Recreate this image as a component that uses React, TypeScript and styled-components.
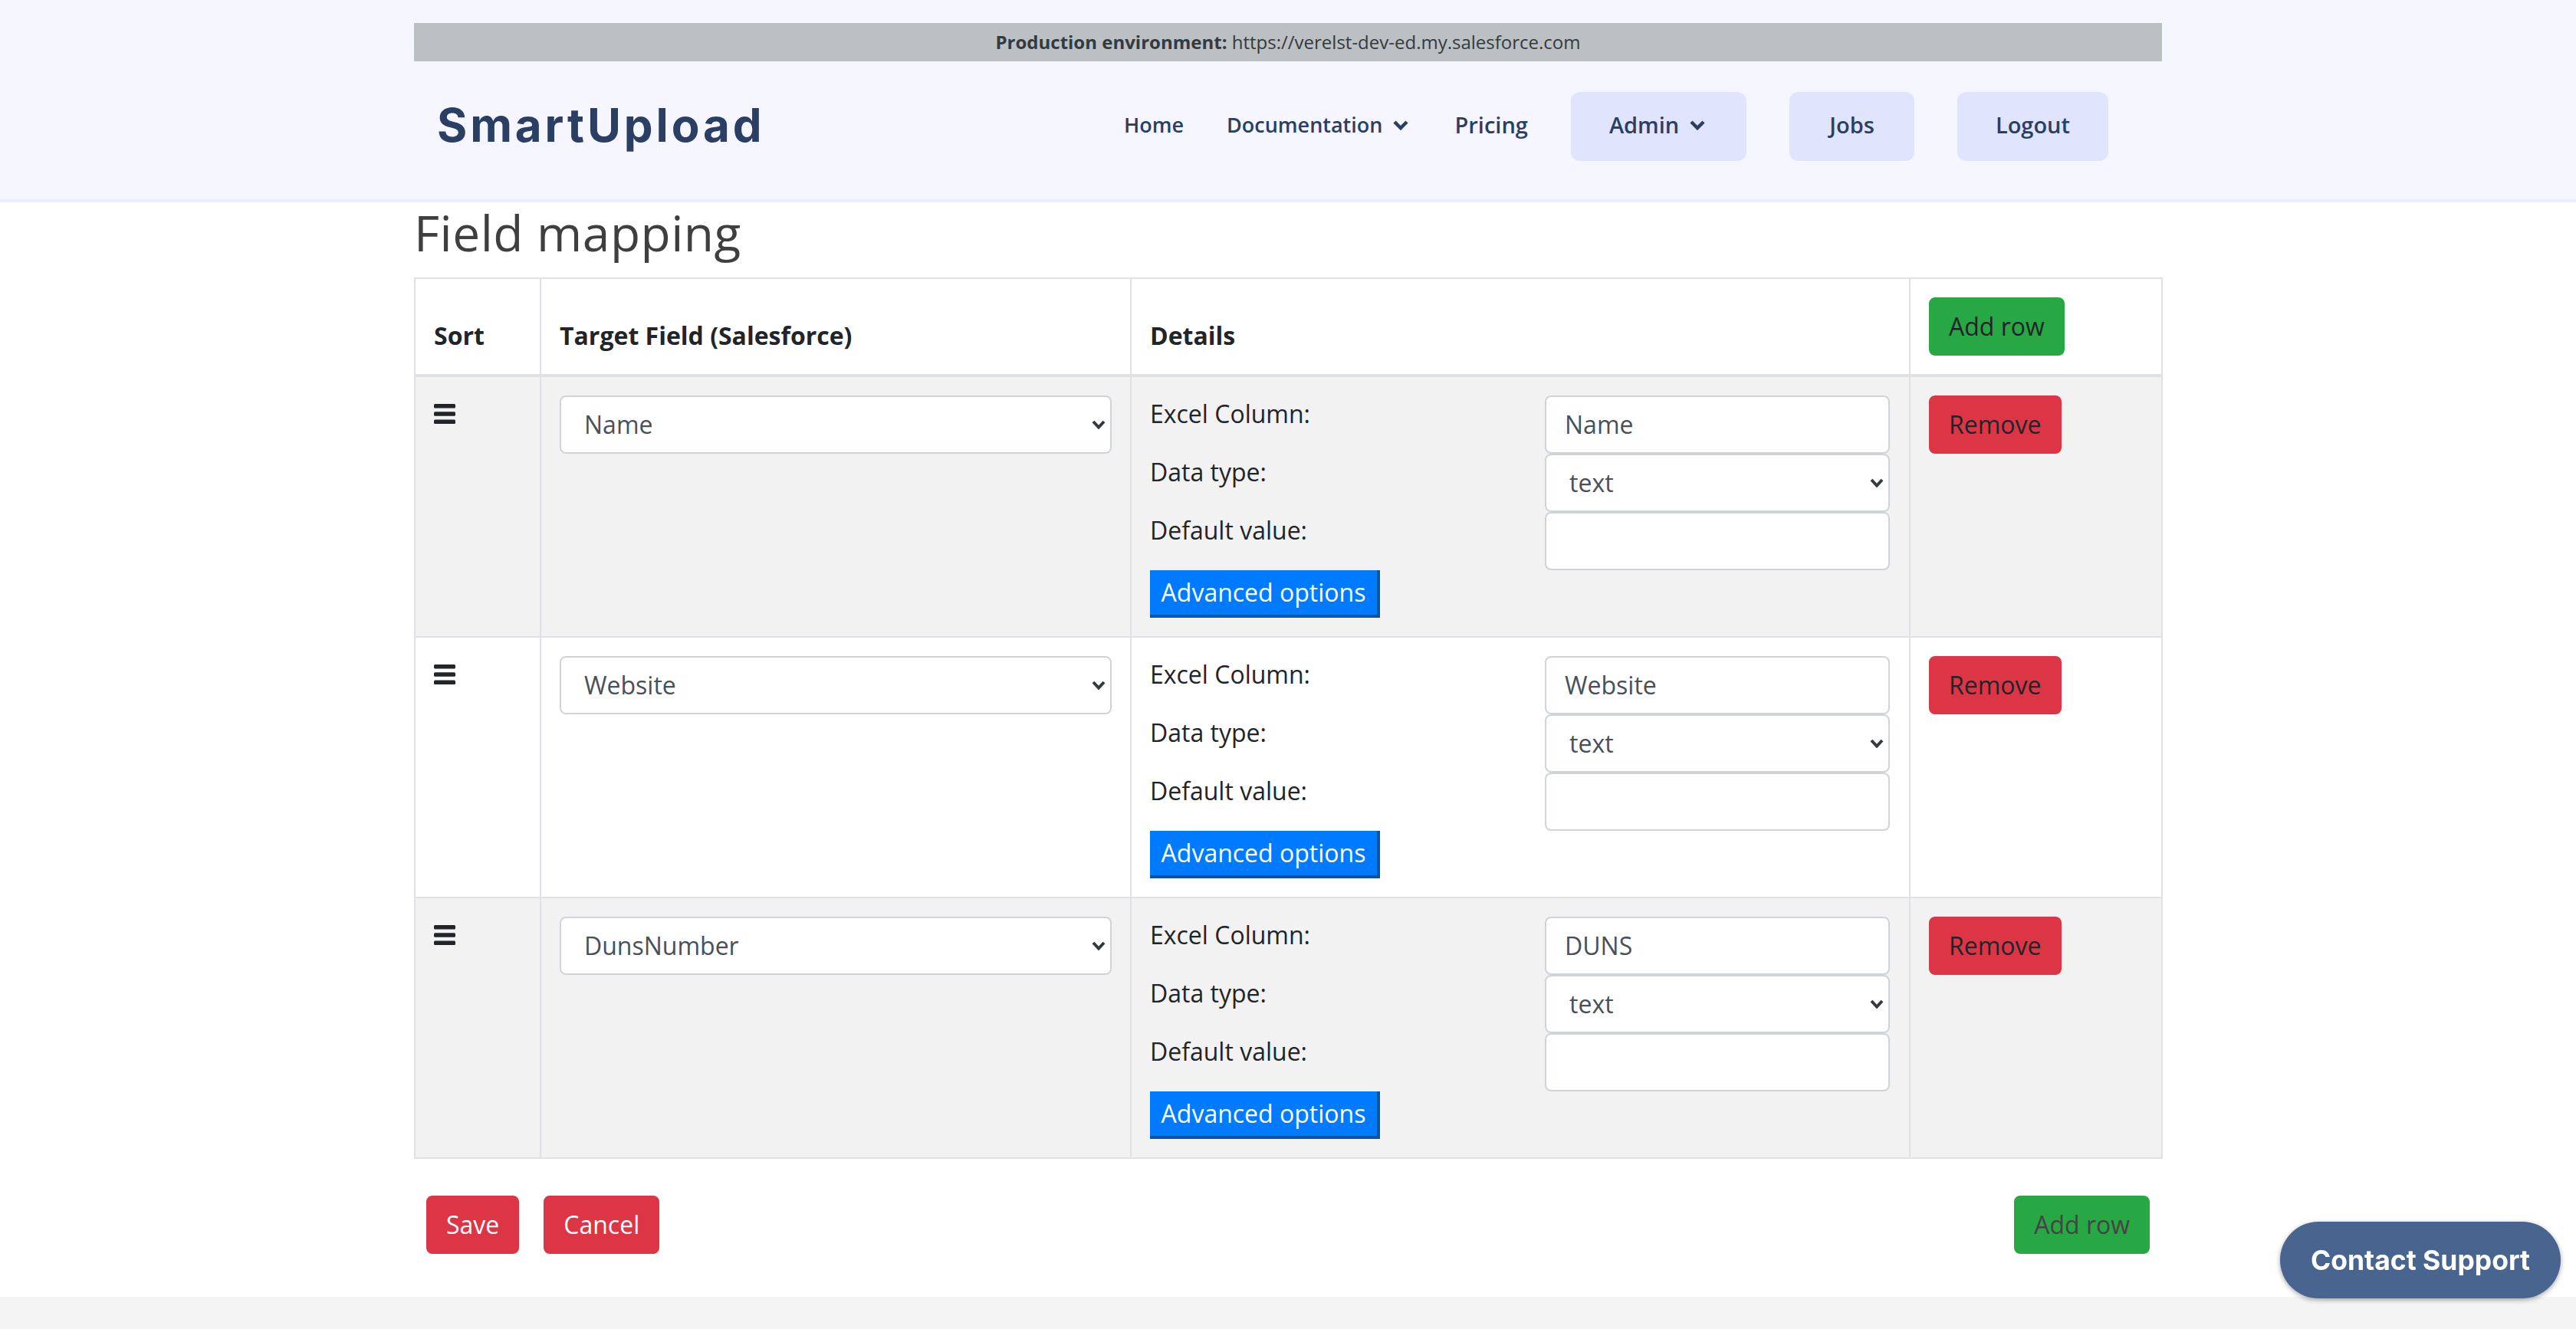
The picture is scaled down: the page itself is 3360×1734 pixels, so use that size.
import React from "react";
import styled, { createGlobalStyle } from "styled-components";

const GlobalStyle = createGlobalStyle`
  * {
    box-sizing: border-box;
  }
  body {
    margin: 0;
    background: #ffffff;
    color: #212529;
    font-family: "Open Sans", "Liberation Sans", sans-serif;
    font-size: 32px;
    line-height: 48px;
  }
`;

const Page = styled.div`
  display: flex;
  flex-direction: column;
  min-height: 100vh;
`;

const Header = styled.header`
  height: 264px;
  padding-top: 30px;
  background: #f5f6ff;
  border-bottom: 4px solid #ebedff;
`;

const Container = styled.div`
  width: 2280px;
  margin: 0 auto;
`;

const EnvBar = styled.div`
  height: 50px;
  background: #bbc0c3;
  color: #343a40;
  font-size: 24px;
  line-height: 50px;
  text-align: center;
  b {
    font-weight: 700;
  }
`;

const NavRow = styled.nav`
  display: flex;
  align-items: center;
  justify-content: space-between;
  height: 90px;
  margin-top: 40px;
  padding: 0 70px 0 30px;
`;

const Logo = styled.div`
  padding-bottom: 4px;
  color: #2a3f63;
  font-family: "Inter", "Open Sans", sans-serif;
  font-size: 60px;
  font-weight: 700;
  letter-spacing: 3.9px;
  line-height: 86px;
`;

const NavLinks = styled.div`
  display: flex;
  align-items: center;
  gap: 56px;
`;

const NavLink = styled.a<{ $size: number }>`
  display: flex;
  align-items: center;
  gap: 14px;
  height: 90px;
  padding-bottom: 4px;
  color: #2a3f63;
  font-size: ${(p) => p.$size}px;
  font-weight: 600;
`;

const NavPill = styled(NavLink)<{ $padX: number }>`
  padding: 0 ${(p) => p.$padX}px 4px;
  border-radius: 12px;
  background: #e0e4fd;
`;

const Chevron = styled.svg`
  display: block;
  width: 20px;
  height: 13px;
  margin-right: 4px;
  fill: none;
  stroke: #2a3f63;
  stroke-width: 4.5;
`;

const Main = styled.main`
  background: #ffffff;
  padding-bottom: 56px;
`;

const Title = styled.h1`
  margin: 2px 0 20px;
  color: #3f3f3f;
  font-size: 64px;
  font-weight: 400;
  letter-spacing: 0.5px;
  line-height: 76px;
`;

const Table = styled.table`
  width: 2279px;
  table-layout: fixed;
  border-collapse: collapse;
`;

const Th = styled.th`
  padding: 24px 24px 26px;
  border: 2px solid #dee2e6;
  border-bottom-width: 4px;
  font-weight: 700;
  text-align: left;
  vertical-align: bottom;
`;

const ActionTh = styled(Th)`
  padding-bottom: 24px;
`;

const Tr = styled.tr<{ $striped: boolean }>`
  background: ${(p) => (p.$striped ? "#f2f2f2" : "#ffffff")};
`;

const Td = styled.td`
  padding: 24px;
  border: 2px solid #dee2e6;
  vertical-align: top;
`;

const DragHandle = styled.svg`
  display: block;
  width: 28px;
  height: 26px;
  margin-top: 11px;
  fill: #212529;
`;

const DetailGrid = styled.div`
  display: grid;
  grid-template-columns: 515px 450px;
  grid-template-rows: repeat(3, 76px) 62px;
`;

const Label = styled.div`
  line-height: 48px;
`;

const TextInput = styled.input`
  display: block;
  width: 100%;
  height: 76px;
  padding: 11px 24px 13px;
  border: 2px solid #ced4da;
  border-radius: 8px;
  background: #ffffff;
  color: #495057;
  font-family: inherit;
  font-size: 32px;
`;

const Select = styled.select`
  display: block;
  width: 100%;
  height: 76px;
  padding: 11px 40px 13px 30px;
  border: 2px solid #ced4da;
  border-radius: 8px;
  appearance: none;
  background: #ffffff
    url("data:image/svg+xml,%3Csvg xmlns='http://www.w3.org/2000/svg' width='18' height='12'%3E%3Cpolyline points='2,2 9,9.5 16,2' fill='none' stroke='%23343a40' stroke-width='4'/%3E%3C/svg%3E")
    no-repeat right 6px center;
  color: #495057;
  font-family: inherit;
  font-size: 32px;
`;

const AdvancedButton = styled.button`
  justify-self: start;
  width: 300px;
  height: 62px;
  padding: 0;
  border: 0;
  border-right: 4px solid #0056a8;
  border-bottom: 4px solid #0056a8;
  background: #007bff;
  color: #ffffff;
  font-family: inherit;
  font-size: 32px;
  line-height: 58px;
`;

const Button = styled.button<{ $tone: "red" | "green"; $text: string }>`
  display: block;
  height: 76px;
  padding: 0 24px 2px;
  border: 2px solid ${(p) => (p.$tone === "red" ? "#dc3545" : "#28a745")};
  border-radius: 8px;
  background: ${(p) => (p.$tone === "red" ? "#dc3545" : "#28a745")};
  color: ${(p) => p.$text};
  font-family: inherit;
  font-size: 32px;
`;

const Actions = styled.div`
  display: flex;
  align-items: center;
  justify-content: space-between;
  margin-top: 48px;
  padding: 0 16px;
`;

const ActionGroup = styled.div`
  display: flex;
  gap: 32px;
`;

const Footer = styled.footer`
  flex: 1;
  background: #f4f4f4;
`;

const ContactButton = styled.button`
  position: fixed;
  right: 20px;
  bottom: 40px;
  width: 366px;
  height: 100px;
  border: 0;
  border-radius: 50px;
  background: #486590;
  box-shadow: 0 2px 6px rgba(0, 0, 0, 0.35);
  color: #ffffff;
  font-family: "Inter", "Liberation Sans", sans-serif;
  font-size: 35.5px;
  font-weight: 700;
`;

const rows = [
  { field: "Name", column: "Name" },
  { field: "Website", column: "Website" },
  { field: "DunsNumber", column: "DUNS" },
];

const DownIcon = () => (
  <Chevron viewBox="0 0 20 13">
    <polyline points="2,2 10,10 18,2" />
  </Chevron>
);

export default function App() {
  return (
    <Page>
      <GlobalStyle />
      <Header>
        <Container>
          <EnvBar>
            <b>Production environment:</b> https://verelst-dev-ed.my.salesforce.com
          </EnvBar>
          <NavRow>
            <Logo>SmartUpload</Logo>
            <NavLinks>
              <NavLink $size={27}>Home</NavLink>
              <NavLink $size={27}>
                Documentation
                <DownIcon />
              </NavLink>
              <NavLink $size={29}>Pricing</NavLink>
              <NavPill $size={29} $padX={50}>
                Admin
                <DownIcon />
              </NavPill>
              <NavPill $size={29} $padX={52}>Jobs</NavPill>
              <NavPill $size={29} $padX={50}>Logout</NavPill>
            </NavLinks>
          </NavRow>
        </Container>
      </Header>
      <Main>
        <Container>
          <Title>Field mapping</Title>
          <Table>
            <colgroup>
              <col width="164" />
              <col width="770" />
              <col width="1016" />
              <col width="329" />
            </colgroup>
            <thead>
              <tr>
                <Th>Sort</Th>
                <Th>Target Field (Salesforce)</Th>
                <Th>Details</Th>
                <ActionTh>
                  <Button $tone="green" $text="#212529">Add row</Button>
                </ActionTh>
              </tr>
            </thead>
            <tbody>
              {rows.map((row, i) => (
                <Tr key={row.field} $striped={i % 2 === 0}>
                  <Td>
                    <DragHandle viewBox="0 0 28 26">
                      <rect x="0" y="0" width="28" height="5.5" rx="1.5" />
                      <rect x="0" y="10.2" width="28" height="5.5" rx="1.5" />
                      <rect x="0" y="20.5" width="28" height="5.5" rx="1.5" />
                    </DragHandle>
                  </Td>
                  <Td>
                    <Select defaultValue={row.field}>
                      <option>{row.field}</option>
                    </Select>
                  </Td>
                  <Td>
                    <DetailGrid>
                      <Label>Excel Column:</Label>
                      <TextInput defaultValue={row.column} />
                      <Label>Data type:</Label>
                      <Select defaultValue="text">
                        <option>text</option>
                      </Select>
                      <Label>Default value:</Label>
                      <TextInput />
                      <AdvancedButton>Advanced options</AdvancedButton>
                    </DetailGrid>
                  </Td>
                  <Td>
                    <Button $tone="red" $text="#212529">Remove</Button>
                  </Td>
                </Tr>
              ))}
            </tbody>
          </Table>
          <Actions>
            <ActionGroup>
              <Button $tone="red" $text="#ffffff">Save</Button>
              <Button $tone="red" $text="#ffffff">Cancel</Button>
            </ActionGroup>
            <Button $tone="green" $text="#444444">Add row</Button>
          </Actions>
        </Container>
      </Main>
      <Footer />
      <ContactButton>Contact Support</ContactButton>
    </Page>
  );
}
